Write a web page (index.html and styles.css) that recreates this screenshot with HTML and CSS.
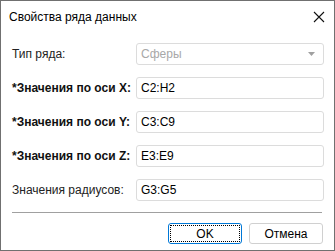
FILE: index.html
```html
<!DOCTYPE html>
<html lang="ru">
<head>
<meta charset="utf-8">
<link rel="stylesheet" href="styles.css">
</head>
<body>
<div class="window">
  <div class="titlebar">
    <span class="title">Свойства ряда данных</span>
    <svg class="close" width="12" height="12" viewBox="0 0 12 12"><path d="M1 1 L11 11 M11 1 L1 11" stroke="#111" stroke-width="1.1" fill="none"/></svg>
  </div>
  <div class="form">
    <label class="lbl">Тип ряда:</label>
    <div class="field select disabled"><span>Сферы</span><svg class="arrow" width="7" height="4" viewBox="0 0 7 4"><path d="M0 0 H7 L3.5 4 Z" fill="#a0a0a0"/></svg></div>
    <label class="lbl bold">*Значения по оси X:</label>
    <div class="field">C2:H2</div>
    <label class="lbl bold">*Значения по оси Y:</label>
    <div class="field">C3:C9</div>
    <label class="lbl bold">*Значения по оси Z:</label>
    <div class="field">E3:E9</div>
    <label class="lbl">Значения радиусов:</label>
    <div class="field">G3:G5</div>
  </div>
  <div class="sep"></div>
  <div class="buttons">
    <button class="btn default"><span class="focus">OK</span></button>
    <button class="btn">Отмена</button>
  </div>
</div>
</body>
</html>
```

FILE: styles.css
```css
html, body {
  margin: 0;
  padding: 0;
  background: #fff;
}
body {
  font-family: "Liberation Sans", Arial, sans-serif;
  font-size: 12px;
  color: #000;
}
.window {
  width: 335px;
  height: 251px;
  box-sizing: border-box;
  border: 1px solid #707070;
  background: #fff;
  display: flex;
  flex-direction: column;
}
.titlebar {
  height: 32px;
  display: flex;
  align-items: center;
  justify-content: space-between;
  padding: 0 9px 0 8px;
  flex: none;
}
.title {
  font-size: 12px;
  color: #000;
}
.close {
  display: block;
}
.form {
  display: grid;
  grid-template-columns: 124px 188px;
  row-gap: 12px;
  padding: 10px 0 0 11px;
  align-items: center;
}
.lbl {
  font-size: 12px;
  color: #222;
  white-space: nowrap;
}
.lbl.bold {
  font-weight: bold;
  color: #111;
}
.field {
  height: 22px;
  box-sizing: border-box;
  border: 1px solid #dcdcdc;
  border-radius: 3px;
  padding: 0 4px;
  display: flex;
  align-items: center;
  font-size: 12px;
  color: #000;
}
.select {
  justify-content: space-between;
  padding-right: 8px;
}
.disabled {
  color: #a8a8a8;
}
.arrow {
  display: block;
}
.sep {
  margin: 11px 12px 0 11px;
  border-top: 1px solid #a0a0a0;
  height: 0;
}
.buttons {
  display: flex;
  justify-content: flex-end;
  gap: 7px;
  padding: 10px 11px 0 0;
}
.btn {
  width: 74px;
  height: 21px;
  box-sizing: border-box;
  border: 1px solid #d0d0d0;
  border-radius: 3px;
  background: #fff;
  font-family: "Liberation Sans", Arial, sans-serif;
  font-size: 12px;
  color: #000;
  padding: 0;
  display: flex;
  align-items: center;
  justify-content: center;
}
.btn.default {
  border: 1px solid #0078d7;
  padding: 1px;
}
.focus {
  flex: 1;
  align-self: stretch;
  border: 1px dotted #000;
  display: flex;
  align-items: center;
  justify-content: center;
}
```
